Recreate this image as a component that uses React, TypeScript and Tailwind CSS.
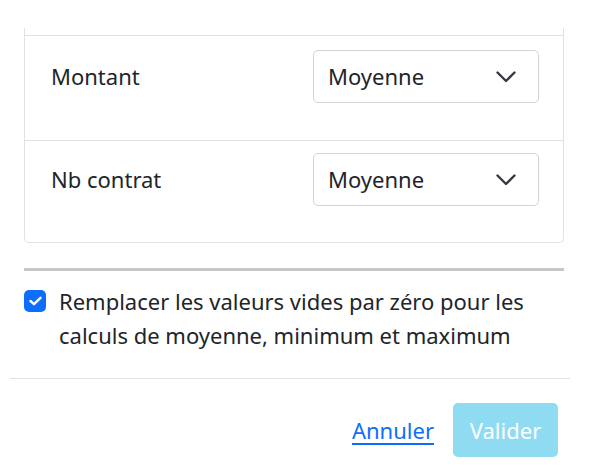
import React, { useState } from 'react';

const font = { fontFamily: '"Noto Sans", "Open Sans", sans-serif' };

interface AggregateRowProps {
  label: string;
  value: string;
  last?: boolean;
}

const Chevron = () => (
  <svg width="20" height="12" viewBox="0 0 20 12" fill="none" className="shrink-0">
    <path d="M1.5 1.5 10 10l8.5-8.5" stroke="#343a40" strokeWidth="2.4" strokeLinecap="round" strokeLinejoin="round" />
  </svg>
);

const AggregateRow: React.FC<AggregateRowProps> = ({ label, value, last }) => (
  <div
    className={`flex items-start justify-between pl-[26px] pr-[24px] ${
      last ? 'pt-[12px] pb-[36px]' : 'pt-[14px] pb-[37px] border-b border-[#dee2e6]'
    }`}
  >
    <span className="h-[53px] flex items-center text-[22px] text-[#212529]">{label}</span>
    <div className="w-[226px] h-[53px] flex items-center justify-between pl-[14px] pr-[22px] border border-[#ced4da] rounded-[5px] bg-white">
      <span className="text-[22px] text-[#212529]">{value}</span>
      <Chevron />
    </div>
  </div>
);

export default function App() {
  const [replaceEmpty, setReplaceEmpty] = useState(true);

  return (
    <div className="w-[592px] h-[472px] bg-white overflow-hidden" style={font}>
      {/* Scrolled modal body */}
      <div className="pt-[28px] pl-[24px] w-[564px]">
        <div className="border-x border-b border-[#dee2e6] rounded-b-[5px]">
          <div className="h-[8px] border-b border-[#dee2e6]" />
          <AggregateRow label="Montant" value="Moyenne" />
          <AggregateRow label="Nb contrat" value="Moyenne" last />
        </div>

        <div className="mt-[25px] h-[3px] bg-[#c6c7c8]" />

        <label className="mt-[13px] flex items-start gap-[13px] cursor-pointer">
          <span
            onClick={() => setReplaceEmpty(!replaceEmpty)}
            className={`mt-[6px] w-[22px] h-[22px] shrink-0 rounded-[5px] flex items-center justify-center ${
              replaceEmpty ? 'bg-[#0d6efd]' : 'border border-[#ced4da] bg-white'
            }`}
          >
            {replaceEmpty && (
              <svg width="13" height="10" viewBox="0 0 13 10" fill="none">
                <path d="M1.5 5 5 8.2 11.5 1.8" stroke="white" strokeWidth="2.4" strokeLinecap="round" strokeLinejoin="round" />
              </svg>
            )}
          </span>
          <span className="w-[470px] text-[22px] leading-[34px] text-[#212529]">
            Remplacer les valeurs vides par zéro pour les calculs de moyenne, minimum et maximum
          </span>
        </label>
      </div>

      {/* Modal footer */}
      <div className="ml-[10px] w-[560px] mt-[26px] border-t border-[#dee2e6] flex justify-end items-center gap-[19px] pt-[24px] pr-[12px]">
        <a href="#" className="text-[22px] text-[#0d6efd] underline underline-offset-[4px]">
          Annuler
        </a>
        <button
          disabled
          className="w-[105px] h-[54px] rounded-[5px] bg-[#8fdcf2] text-white text-[22px]"
        >
          Valider
        </button>
      </div>
    </div>
  );
}
